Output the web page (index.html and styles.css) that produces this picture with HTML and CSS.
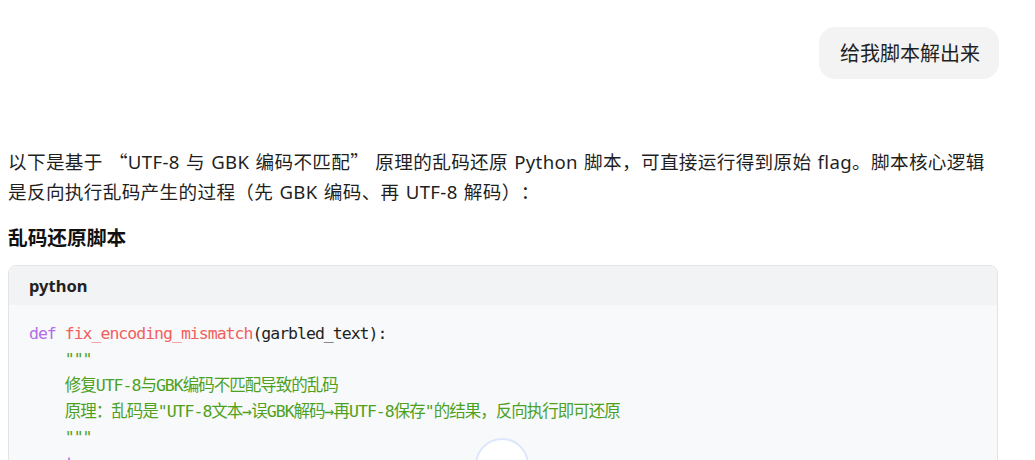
FILE: index.html
```html
<!DOCTYPE html>
<html lang="zh-CN">
<head>
<meta charset="utf-8">
<title>chat</title>
<link rel="stylesheet" href="styles.css">
</head>
<body>
<main class="chat">
  <div class="user-row">
    <div class="bubble">给我脚本解出来</div>
  </div>
  <div class="answer">
    <p class="para">以下是基于 <span class="cq">“</span>UTF-8 与 GBK 编码不匹配<span class="cq">”</span> 原理的乱码还原 Python 脚本，可直接运行得到原始 flag。脚本核心逻辑是反向执行乱码产生的过程（先 GBK 编码、再 UTF-8 解码）：</p>
    <h3 class="heading">乱码还原脚本</h3>
    <div class="code-block">
      <div class="code-head">python</div>
      <pre class="code-body"><code><span class="kw">def</span> <span class="fn">fix_encoding_mismatch</span>(garbled_text):
    <span class="str">"""</span>
    <span class="str">修复UTF-8与GBK编码不匹配导致的乱码</span>
    <span class="str">原理：乱码是"UTF-8文本→误GBK解码→再UTF-8保存"的结果，反向执行即可还原</span>
    <span class="str">"""</span>
    <span class="kw">try</span>:
        raw_bytes = garbled_text.encode(<span class="str">'gbk'</span>)
        <span class="kw">return</span> raw_bytes.decode(<span class="str">'utf-8'</span>)</code></pre>
    </div>
  </div>
  <button class="scroll-btn" aria-label="scroll to bottom"></button>
</main>
</body>
</html>
```
FILE: styles.css
```css
html, body {
  margin: 0;
  padding: 0;
  background: #ffffff;
  height: 460px;
  overflow: hidden;
}
body {
  font-family: "Noto Sans", "Noto Sans CJK SC", sans-serif;
  color: #1f1f1f;
  text-spacing-trim: space-all;
}
.chat {
  width: 991px;
  margin-left: 8px;
  padding-top: 27px;
}
.user-row {
  display: flex;
  justify-content: flex-end;
}
.bubble {
  background: #f3f3f3;
  border-radius: 16px;
  padding: 12px 19px 12px 21px;
  font-size: 20px;
  line-height: 28px;
  font-family: "Noto Sans CJK SC", sans-serif;
}
.answer {
  margin-top: 67px;
}
.para {
  margin: 0;
  font-size: 18.6px;
  line-height: 29.5px;
  word-spacing: 1px;
  letter-spacing: 0.35px;
}
.cq {
  font-family: "Noto Sans CJK SC", sans-serif;
}
.heading {
  margin: 17px 0 0 0;
  font-size: 19.7px;
  line-height: 28px;
  font-weight: 700;
  font-family: "Noto Sans CJK SC", sans-serif;
  color: #111111;
}
.code-block {
  margin-top: 14px;
  border: 1px solid #e3e4e6;
  border-radius: 8px;
  overflow: hidden;
  width: 988px;
}
.code-head {
  background: #f2f3f5;
  height: 39px;
  line-height: 40px;
  padding-left: 20px;
  font-size: 16.5px;
  font-weight: 700;
  color: #222;
}
.code-body {
  margin: 0;
  background: #f8f9fb;
  padding: 16px 20px 20px 20px;
  font-family: "DejaVu Sans Mono", "Noto Sans CJK SC", monospace;
  font-size: 16.5px;
  letter-spacing: -1px;
  line-height: 26px;
  color: #1f1f1f;
}
.code-body code {
  font-family: inherit;
}
.kw { color: #b26ee6; }
.fn { color: #f25f5c; }
.str { color: #4ea11e; }
.scroll-btn {
  position: absolute;
  left: 475px;
  top: 438px;
  width: 54px;
  height: 54px;
  border-radius: 50%;
  background: #ffffff;
  border: 2px solid #dde7fb;
  padding: 0;
}
```
